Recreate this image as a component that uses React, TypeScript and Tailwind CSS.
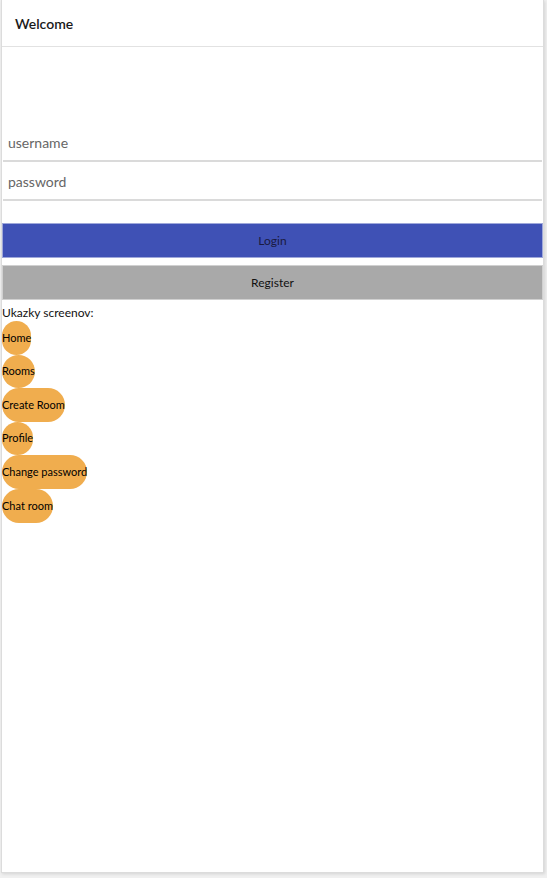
export default function App() {
  const links = ["Home", "Rooms", "Create Room", "Profile", "Change password", "Chat room"];
  return (
    <div className="min-h-[878px] w-[547px] bg-[#f0f0f0] pr-[3px] pb-[5px]" style={{ fontFamily: "Lato, 'Open Sans', sans-serif" }}>
      <div className="ml-px flex h-[873px] w-[543px] flex-col border border-t-0 border-[#dcdcdc] bg-white shadow-[1px_1px_3px_rgba(0,0,0,0.12)]">
        <div className="flex h-[47px] items-center border-b border-[#e2e2e2] pl-[13px] text-[14px] font-semibold text-[#1a1a1a]">
          Welcome
        </div>
        <div className="mt-[75px] px-[1px]">
          <input
            placeholder="username"
            className="block h-[40px] w-full border-b-2 border-[#dadada] px-[5px] pt-[2px] text-[14px] text-[#333] outline-none placeholder:text-[#666]"
          />
          <input
            placeholder="password"
            type="password"
            className="block h-[39px] w-full border-b-2 border-[#dadada] px-[5px] pt-[2px] text-[14px] text-[#333] outline-none placeholder:text-[#666]"
          />
        </div>
        <div className="mt-[22px] flex flex-col gap-[7px]">
          <button className="h-[35px] w-full border border-[#9fa8da] bg-[#3f51b5] text-[12px] text-[#1a1a40]">Login</button>
          <button className="h-[35px] w-full border border-[#d0d0d0] bg-[#a9a9a9] text-[12px] text-[#111]">Register</button>
        </div>
        <div className="mt-[5px] text-[12px] leading-[16px] text-[#111]">Ukazky screenov:</div>
        <div className="flex flex-col items-start">
          {links.map((l) => (
            <button key={l} className="h-[33.6px] rounded-full bg-[#f0ad4e] text-left text-[11px] text-black">
              {l}
            </button>
          ))}
        </div>
      </div>
    </div>
  );
}
